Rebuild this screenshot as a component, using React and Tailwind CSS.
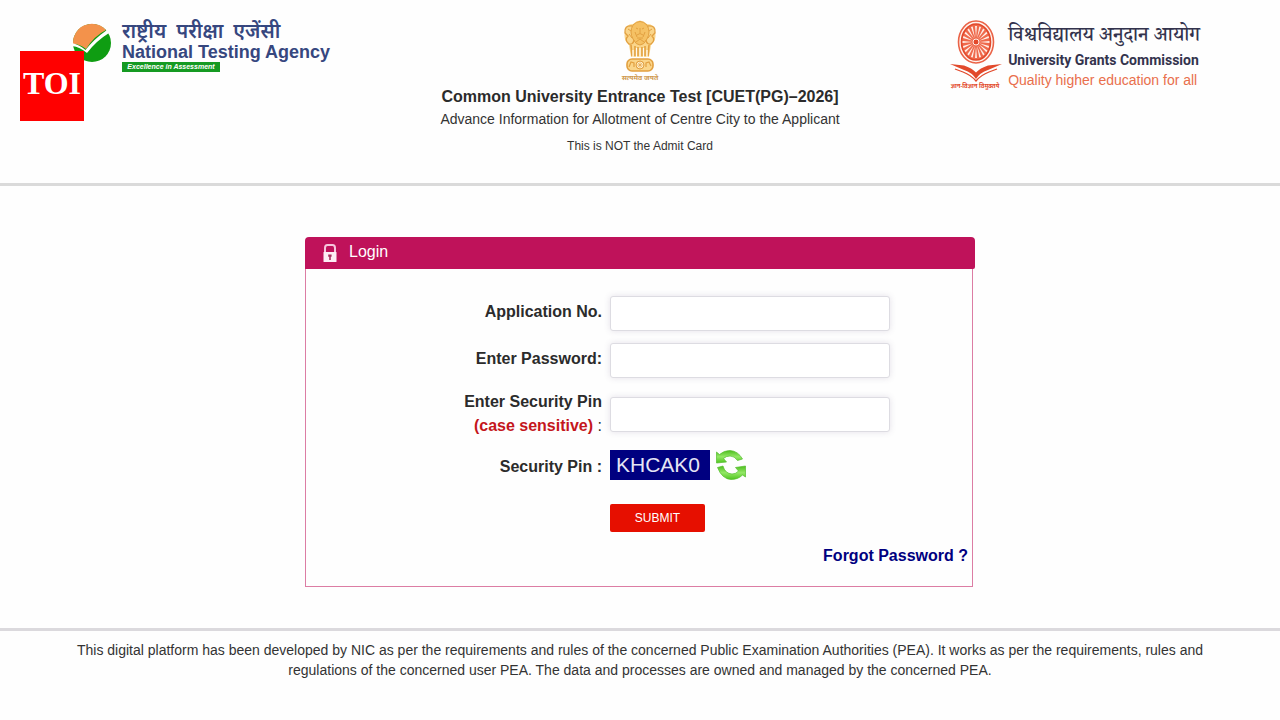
import React, { useState } from 'react';

function NtaLogo() {
    return (
        <div className="flex items-start gap-2.5">
            <svg className="mt-0.5 h-10 w-10" viewBox="0 0 40 40" aria-hidden="true">
                <circle cx="20" cy="21" r="19" fill="#0f9d12" />
                <path d="M1 22 A19 19 0 0 1 34 8 Q22 14 14 27 Q8 22 1 22 Z" fill="#f3924b" />
                <path d="M0 21 Q8 23 13.500 28 Q22 17 35 8 L37 11 Q24 19 15 31 Q8 25 0 24 Z" fill="#ffffff" />
            </svg>
            <div>
                <p className="flex gap-2.5 font-['Noto_Sans','Liberation_Sans',sans-serif] text-xl leading-[22px] font-semibold whitespace-nowrap text-[#36477f]">
                    <span>राष्ट्रीय</span>
                    <span>परीक्षा</span>
                    <span>एजेंसी</span>
                </p>
                <p className="text-lg leading-5 font-bold text-[#36477f]">National Testing Agency</p>
                <p className="w-[98px] bg-[#159a22] text-center text-[7px] leading-[10px] font-bold whitespace-nowrap text-white italic">Excellence in Assessment</p>
            </div>
        </div>
    );
}

function Emblem() {
    return (
        <svg className="h-16 w-10" viewBox="0 0 40 64" fill="none" stroke="#e2a040" aria-hidden="true">
            {/* lions */}
            <path d="M13 4 Q20 -3 27 4 Q35 4 35 12 Q37 20 31 25 L29 37 H11 L9 25 Q3 20 5 12 Q5 4 13 4 Z" fill="#fad58a" stroke="none" />
            <path d="M13 5 Q20 -2 27 5 Q31 12 27 19 Q24 25 20 25 Q16 25 13 19 Q9 12 13 5 Z" fill="#f5c164" strokeWidth="1" />
            <path d="M12 6 Q4 5 5 13 L8 16 Q4 20 9 24 Q13 25 14 20 M28 6 Q36 5 35 13 L32 16 Q36 20 31 24 Q27 25 26 20" strokeWidth="1.4" />
            <path d="M16 8 L18 9 M22 9 L24 8 M20 8 V13 M17 15 Q20 12 23 15 M17 18 H23 M15 12 L17 17 M25 12 L23 17 M8 9 L11 11 M32 9 L29 11 M9 14 L12 18 M31 14 L28 18 M16 22 L20 19 L24 22" strokeWidth="1" />
            <path d="M11 25 L12 36 M15 26 V36 M18 27 V36 M22 27 V36 M25 26 V36 M29 25 L28 36" strokeWidth="1.6" />
            <path d="M16.5 28 V38 M20 28 V38 M23.5 28 V38 M13 30 V37 M27 30 V37" stroke="#fffaf0" strokeWidth="1.2" />
            {/* abacus */}
            <rect x="7" y="39" width="26" height="12" rx="5" fill="#fad58a" strokeWidth="1.6" />
            <circle cx="20" cy="45" r="4" fill="#fff0cc" strokeWidth="1" />
            <path d="M20 41 V49 M16 45 H24 M17 42 L23 48 M23 42 L17 48" strokeWidth="0.6" />
            <path d="M9 47 L11 42 L14 43 V47 M26 47 V43 L29 42 L31 46" strokeWidth="1.2" />
            <text x="20" y="60" textAnchor="middle" fontSize="7" fill="#cf9a50" stroke="none" fontFamily="Noto Sans, sans-serif" fontWeight="bold">सत्यमेव जयते</text>
        </svg>
    );
}

function UgcLogo() {
    const spokes = Array.from({ length: 20 }, (_, i) => i * 18);
    return (
        <div className="flex items-start gap-1.5">
            <svg className="h-[72px] w-[52px]" viewBox="0 0 52 72" aria-hidden="true">
                <ellipse cx="26" cy="22" rx="17.5" ry="21" fill="#fff4ef" stroke="#ea6347" strokeWidth="1.6" />
                <ellipse cx="26" cy="22" rx="14.5" ry="18" fill="#ef6a4c" stroke="#e2492b" strokeWidth="1.6" />
                <g transform="translate(26 22) scale(0.84 1)">
                    {spokes.map((a) => (
                        <path key={a} d="M0 -4 L-1.100 -16 H1.100 Z" fill="#fff0e9" transform={`rotate(${a})`} />
                    ))}
                </g>
                <circle cx="26" cy="22" r="3" fill="#e2492b" stroke="#fff0e9" strokeWidth="1" />
                <path d="M0 44 L14 45.500 Q22 48 26 52.500 Q30 48 38 45.500 L52 44 L38 50 Q30 52.500 26 59 Q22 52.500 14 50 Z" fill="#e2492b" />
                <path d="M5 49 L13 52 Q21 55 26 61 Q31 55 39 52 L47 49" fill="none" stroke="#e2492b" strokeWidth="1.3" />
                <text x="25" y="68" textAnchor="middle" fontSize="6" fill="#e2492b" fontFamily="Noto Sans, sans-serif" fontWeight="bold">ज्ञान-विज्ञान विमुक्तये</text>
            </svg>
            <div>
                <p className="mt-1.5 font-['Noto_Serif_Devanagari','Noto_Sans','Liberation_Sans',sans-serif] text-xl leading-6 font-medium whitespace-nowrap text-[#33334d]">विश्वविद्यालय अनुदान आयोग</p>
                <p className="font-[Roboto,sans-serif] text-sm leading-5 font-bold text-[#33334d]">University Grants Commission</p>
                <p className="text-sm leading-5 text-[#e96f4c]">Quality higher education for all</p>
            </div>
        </div>
    );
}

function LockIcon() {
    return (
        <svg className="h-[18px] w-3.5" viewBox="0 0 14 18" aria-hidden="true">
            <path d="M2 8 V4 Q2 1 4.500 1 H9.500 Q12 1 12 4 V8" fill="none" stroke="#f6c6dc" strokeWidth="2" />
            <rect x="0.5" y="8" width="13" height="10" rx="0.5" fill="#fdeef5" />
            <path d="M5.2 10.5 H8.6 V12.8 H7.8 V16 H6.2 V12.8 H5.2 Z" fill="#a8305f" />
        </svg>
    );
}

function RefreshIcon() {
    return (
        <svg className="h-[30px] w-[30px]" viewBox="0 0 30 30" aria-hidden="true">
            <defs>
                <linearGradient id="leaf" x1="0" y1="0" x2="0" y2="1">
                    <stop offset="0" stopColor="#4dbd1d" />
                    <stop offset="0.5" stopColor="#93e866" />
                    <stop offset="1" stopColor="#4fc41f" />
                </linearGradient>
            </defs>
            <g fill="url(#leaf)" stroke="#55bd2e" strokeWidth="0.7" strokeLinejoin="round">
                <path d="M0.5 2 L3.500 4.500 Q8 0.500 14 0.500 Q22 1 26.500 9 L21.500 10.500 Q18.500 6 14 6 Q10 6 7.500 8.500 L10.500 12 L0.500 13 Z" />
                <path d="M29.500 27 L26.500 25 Q22 29.500 15 29.500 Q6 29 1.500 17.500 L7 16 Q9 23.500 16 24 Q20 24 22.500 21 L19.500 17.500 L29.500 16 Z" />
            </g>
        </svg>
    );
}

const inputClass = "h-[35px] w-[280px] rounded-[3px] border border-[#dddce2] bg-white px-3 text-sm shadow-[0_0_6px_rgba(80,60,110,0.15)] outline-none focus:border-[#bf125a]";
const labelClass = "w-[296px] text-right font-bold";

function LoginForm() {
    const [form, setForm] = useState({ applicationNo: "", password: "", pin: "" });

    const handleChange = (e) => {
        setForm({ ...form, [e.target.name]: e.target.value });
    };

    return (
        <section className="mx-auto w-full max-w-[670px]">
            <h2 className="flex h-8 items-center gap-3 rounded-t rounded-br-xs bg-[#bf125a] pl-[18px] text-base text-white">
                <LockIcon />
                <span className="pb-0.5">Login</span>
            </h2>
            <form onSubmit={(e) => e.preventDefault()} className="mr-0.5 flex flex-col gap-3 border border-t-0 border-[#dc7da4] pt-[27px] pb-[18px] text-base leading-6 text-[#2b2b2b]">
                <div className="flex items-center gap-2">
                    <label htmlFor="applicationNo" className={labelClass + " pb-1"}>Application No.</label>
                    <input id="applicationNo" name="applicationNo" type="text" value={form.applicationNo} onChange={handleChange} className={inputClass} />
                </div>
                <div className="flex items-center gap-2">
                    <label htmlFor="password" className={labelClass + " pb-1"}>Enter Password:</label>
                    <input id="password" name="password" type="password" value={form.password} onChange={handleChange} className={inputClass} />
                </div>
                <div className="flex items-center gap-2">
                    <label htmlFor="pin" className={labelClass}>
                        Enter Security Pin
                        <br />
                        <span className="text-[#c4161c]">(case sensitive)</span> <span className="font-normal">:</span>
                    </label>
                    <input id="pin" name="pin" type="text" value={form.pin} onChange={handleChange} className={inputClass} />
                </div>
                <div className="flex items-center gap-2">
                    <span className={labelClass + " pt-1"}>Security Pin :</span>
                    <div className="flex items-center gap-1.5">
                        <span className="h-[30px] w-[100px] bg-[#000080] pl-1.5 text-[21px] leading-[30px] text-[#e6e6f5]">KHCAK0</span>
                        <button type="button" aria-label="Refresh security pin" className="cursor-pointer">
                            <RefreshIcon />
                        </button>
                    </div>
                </div>
                <button type="submit" className="mt-3 ml-[304px] h-7 w-[95px] cursor-pointer rounded-xs bg-[#e60f00] text-xs text-white">SUBMIT</button>
                <a href="#forgot" className="mr-1 self-end font-bold text-[#000080]">Forgot Password ?</a>
            </form>
        </section>
    );
}

function App() {
    return (
        <div className="relative min-h-screen bg-[#fefefe] font-['Liberation_Sans',Arial,sans-serif] text-[#333333]">
            <header className="grid grid-cols-[1fr_auto_1fr] items-start border-b-3 border-[#dadada] px-[72px] pt-5 pb-[26px]">
                <NtaLogo />
                <div className="flex flex-col items-center text-center">
                    <Emblem />
                    <h1 className="mt-0.5 text-base leading-[22px] font-bold text-[#2b2b2b]">Common University Entrance Test [CUET(PG)–2026]</h1>
                    <p className="text-sm leading-[22px]">Advance Information for Allotment of Centre City to the Applicant</p>
                    <p className="mt-[5px] text-xs leading-[22px]">This is NOT the Admit Card</p>
                </div>
                <div className="justify-self-end pr-2">
                    <UgcLogo />
                </div>
            </header>

            {/* publisher badge */}
            <div className="absolute top-[51px] left-5 flex h-[70px] w-16 items-center justify-center bg-[#ff0000] pb-1.5 font-['Liberation_Serif',serif] text-[32px] leading-8 font-bold text-white">TOI</div>

            <main className="pt-[51px] pb-[41px]">
                <LoginForm />
            </main>

            <footer className="border-t-3 border-[#dbd9dd] px-[72px] pt-[9px] pb-10 text-center text-sm">
                This digital platform has been developed by NIC as per the requirements and rules of the concerned Public Examination Authorities (PEA). It works as per the requirements, rules and regulations of the concerned user PEA. The data and processes are owned and managed by the concerned PEA.
            </footer>
        </div>
    );
}

export default App;
